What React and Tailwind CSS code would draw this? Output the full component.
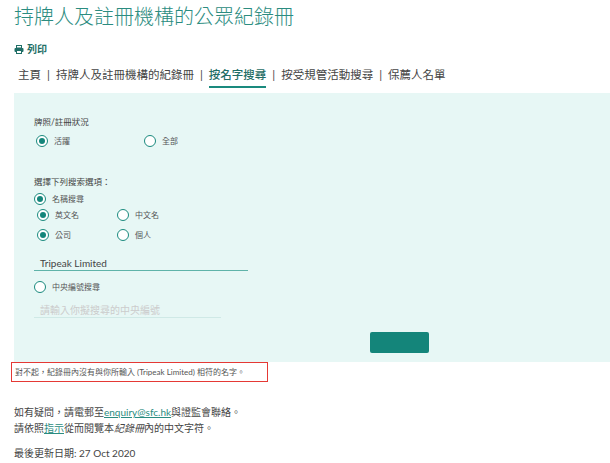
const F = { fontFamily: 'Lato, "Noto Sans CJK TC", sans-serif' };

function Radio({ on, label, className = "" }) {
  return (
    <div className={"flex items-center gap-[6px] " + className}>
      <span className="w-[12px] h-[12px] rounded-full border border-[#1a8a7e] bg-white flex items-center justify-center">
        {on && <span className="w-[6px] h-[6px] rounded-full bg-[#14857a]" />}
      </span>
      <span className="text-[8px] text-[#555]">{label}</span>
    </div>
  );
}

export default function App() {
  return (
    <div style={F} className="w-[610px] h-[463px] bg-white overflow-hidden text-[#333]">
      <div className="pl-[14px] pt-[3px] text-[20px] font-light leading-[26px] text-[#2b8c80]">持牌人及註冊機構的公眾紀錄冊</div>
      <div className="pl-[14px] mt-[13px] flex items-center gap-[3px] text-[10px] font-bold text-[#1f6e66]">
        <svg width="10" height="9" viewBox="0 0 10 9"><rect x="2.5" y="0.5" width="5" height="2.5" fill="none" stroke="#1f6e66"/><rect x="0.5" y="3" width="9" height="4" rx="1" fill="#1f6e66"/><rect x="2.5" y="5.5" width="5" height="3" fill="white" stroke="#1f6e66"/></svg>
        列印
      </div>
      <div className="pl-[18px] mt-[9px] flex items-start text-[11.5px] text-[#444] h-[24px]">
        <span>主頁</span><span className="mx-[6px]">|</span>
        <span>持牌人及註冊機構的紀錄冊</span><span className="mx-[6px]">|</span>
        <span className="font-medium text-[#1f6e66] border-b-2 border-[#1a8a7e] pb-[3px]">按名字搜尋</span><span className="mx-[6px]">|</span>
        <span>按受規管活動搜尋</span><span className="mx-[6px]">|</span>
        <span>保薦人名單</span>
      </div>
      <div className="ml-[14px] mt-[3px] h-[269px] bg-[#e7f7f5] pl-[20px] pt-[23px] relative">
        <div className="text-[8.5px] text-[#444]">牌照/註冊狀況</div>
        <div className="flex mt-[6px] pl-[2px]">
          <Radio on label="活躍" className="w-[108px]" />
          <Radio label="全部" />
        </div>
        <div className="text-[8.5px] text-[#444] mt-[29px]">選擇下列搜索選項：</div>
        <Radio on label="名稱搜尋" className="mt-[4px]" />
        <div className="flex mt-[4px] pl-[3px]">
          <Radio on label="英文名" className="w-[80px]" />
          <Radio label="中文名" />
        </div>
        <div className="flex mt-[8px] pl-[3px]">
          <Radio on label="公司" className="w-[80px]" />
          <Radio label="個人" />
        </div>
        <div className="w-[214px] mt-[15px] border-b border-[#5fb3a9] pl-[6px] text-[10px] text-[#444] leading-[14px]">Tripeak Limited</div>
        <Radio label="中央編號搜尋" className="mt-[10px]" />
        <div className="w-[187px] mt-[10px] border-b border-[#cfe9e6] pl-[6px] text-[10px] text-[#ccc] leading-[14px]">請輸入你擬搜尋的中央編號</div>
        <div className="absolute left-[356px] top-[239px] w-[59px] h-[21px] rounded-[2px] bg-[#14857a]" />
      </div>
      <div className="ml-[11px] w-[257px] h-[20px] border border-[#e53935] flex items-center pl-[3px] text-[8px] text-[#555]">
        對不起，紀錄冊內沒有與你所輸入 (Tripeak Limited) 相符的名字。
      </div>
      <div className="pl-[14px] mt-[22px] text-[10px] leading-[16px] text-[#444]">
        <div>如有疑問，請電郵至<span className="underline text-[#2b8c80]">enquiry@sfc.hk</span>與證監會聯絡。</div>
        <div>請依照<span className="underline text-[#2b8c80]">指示</span>從而閱覽本<i>紀錄冊</i>內的中文字符。</div>
        <div className="mt-[9px]">最後更新日期: 27 Oct 2020</div>
      </div>
    </div>
  );
}
